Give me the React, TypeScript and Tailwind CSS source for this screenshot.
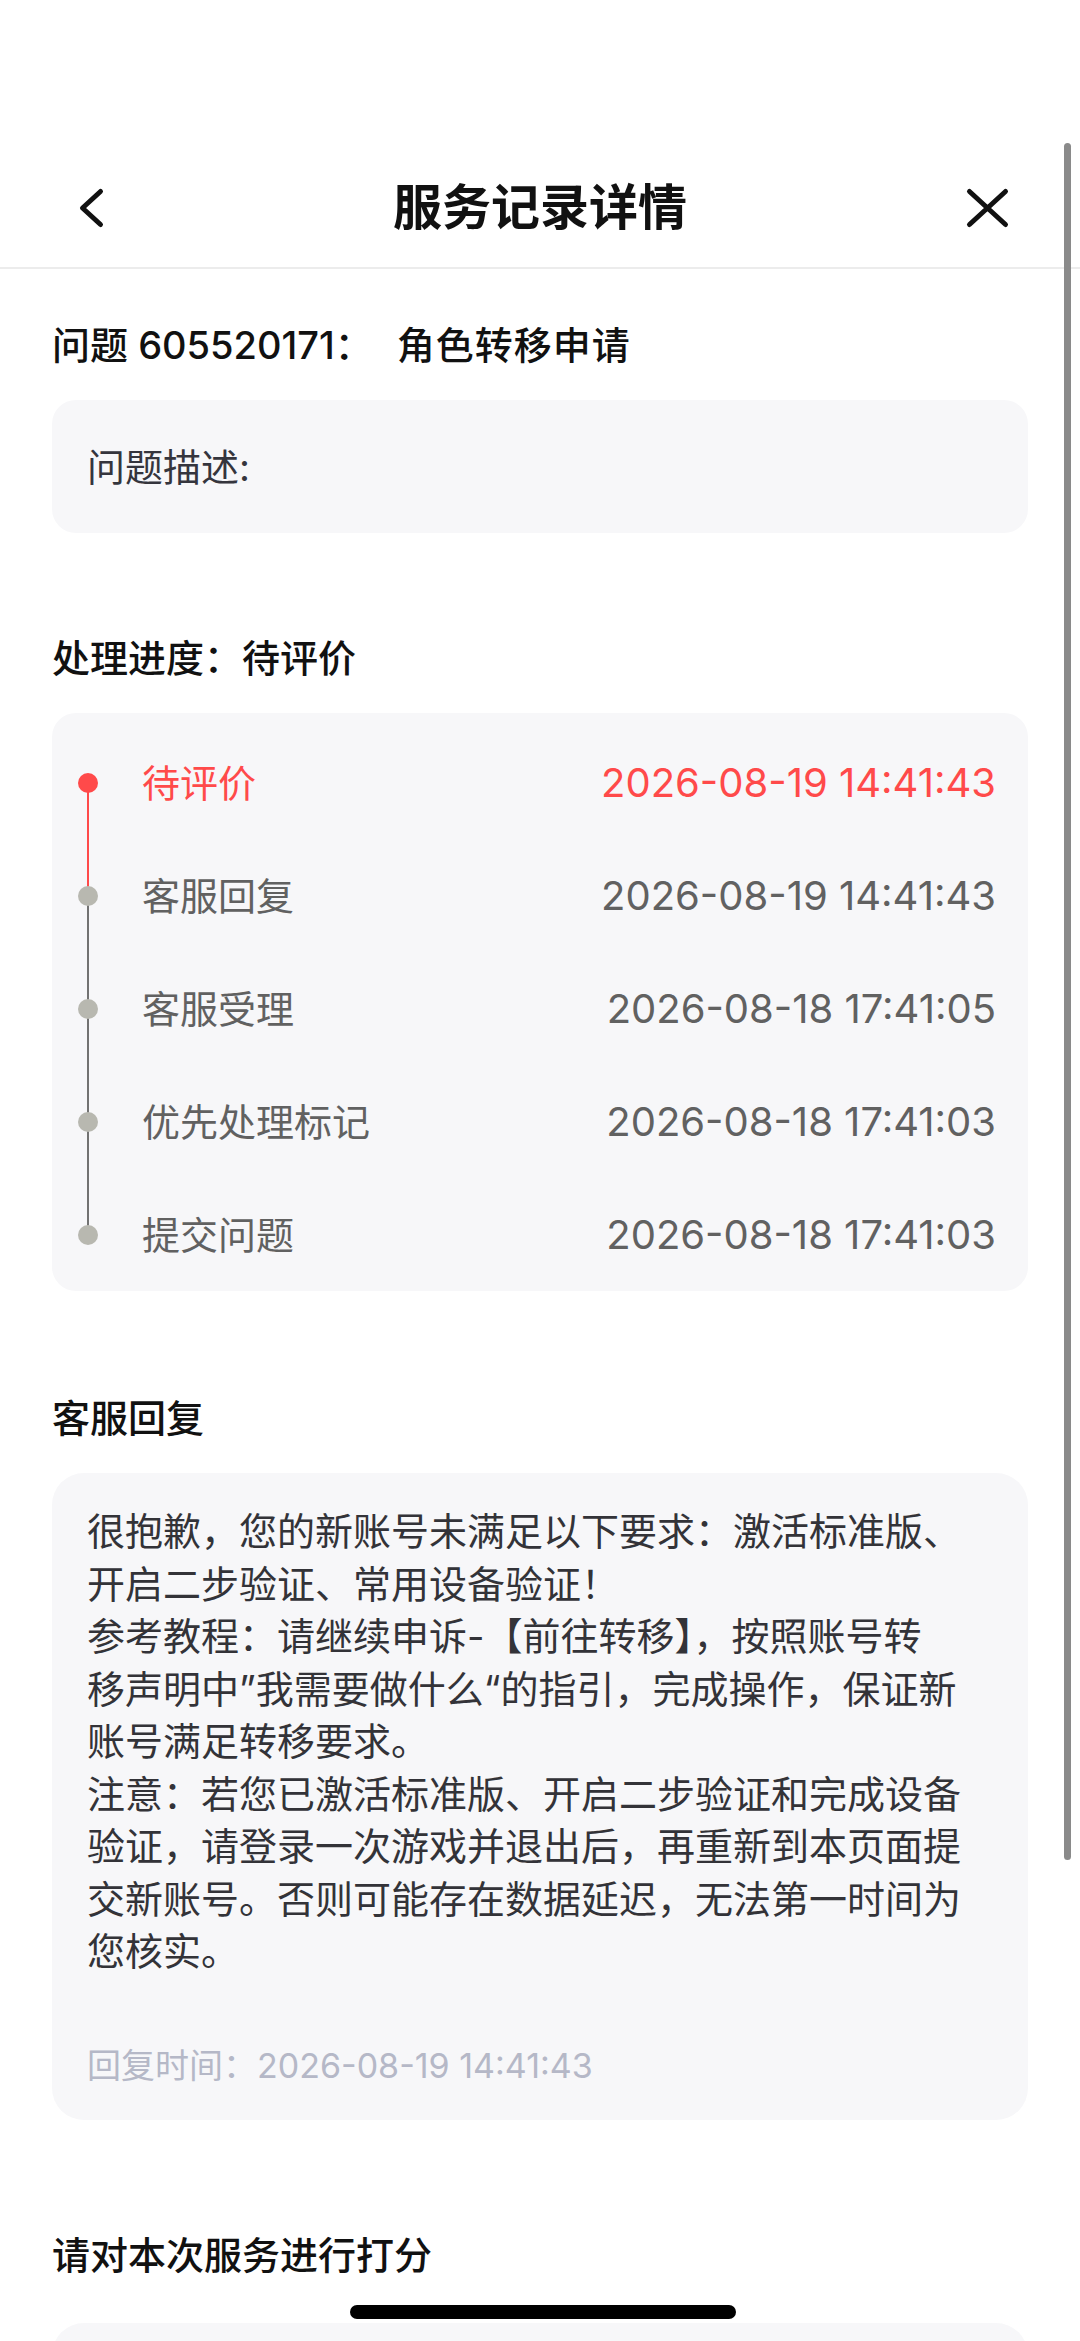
import React from 'react';

type Step = { label: string; time: string; active?: boolean };

const steps: Step[] = [
  { label: '待评价', time: '2026-08-19 14:41:43', active: true },
  { label: '客服回复', time: '2026-08-19 14:41:43' },
  { label: '客服受理', time: '2026-08-18 17:41:05' },
  { label: '优先处理标记', time: '2026-08-18 17:41:03' },
  { label: '提交问题', time: '2026-08-18 17:41:03' },
];

// visual lines of the reply, kept as in the app
const replyLines = [
  '很抱歉，您的新账号未满足以下要求：激活标准版、',
  '开启二步验证、常用设备验证！',
  '参考教程：请继续申诉-【前往转移】，按照账号转',
  '移声明中”我需要做什么“的指引，完成操作，保证新',
  '账号满足转移要求。',
  '注意：若您已激活标准版、开启二步验证和完成设备',
  '验证，请登录一次游戏并退出后，再重新到本页面提',
  '交新账号。否则可能存在数据延迟，无法第一时间为',
  '您核实。',
];

const font = 'font-["Inter","Noto_Sans_CJK_SC",sans-serif]';

const SectionTitle: React.FC<{ children: React.ReactNode; className?: string }> = ({ children, className }) => (
  <h2 className={`text-[38px] leading-[52px] font-medium text-[#111] ${className ?? ''}`}>{children}</h2>
);

const App: React.FC = () => {
  return (
    <div className={`relative h-[2341px] overflow-hidden bg-white ${font}`}>
      {/* Header */}
      <div className="pt-[148px]">
        <div className="grid h-[121px] grid-cols-[1fr_auto_1fr] items-center border-b-2 border-[#ececec]">
          <div className="flex pl-[76px]">
            <svg width="30" height="44" viewBox="0 0 30 44" fill="none">
              <path d="M24.5 5.5 L6.5 22 L24.5 38.5" stroke="#111" strokeWidth="5" strokeLinecap="round" strokeLinejoin="round" />
            </svg>
          </div>
          <h1 className="text-[49px] font-bold leading-[60px] text-[#111]">服务记录详情</h1>
          <div className="flex justify-end pr-[68px]">
            <svg width="50" height="44" viewBox="0 0 50 44" fill="none">
              <path d="M7.5 5.5 L43.5 38.5 M43.5 5.5 L7.5 38.5" stroke="#111" strokeWidth="5" strokeLinecap="round" />
            </svg>
          </div>
        </div>
      </div>

      <div className="px-[52px]">
        {/* Question */}
        <SectionTitle className="mt-[50px]">
          问题 605520171：<span className="ml-[24px] tracking-[1px]">角色转移申请</span>
        </SectionTitle>
        <div className="mt-[29px] flex h-[133px] items-center rounded-[24px] bg-[#f7f7f9] pl-[35px]">
          <span className="text-[38px] leading-[52px] text-[#35353d]">问题描述:</span>
        </div>

        {/* Progress */}
        <SectionTitle className="mt-[99px]">处理进度：待评价</SectionTitle>
        <div className="mt-[29px] rounded-[24px] bg-[#f7f7f9] pt-[13px] pl-[26px] pr-[32px]">
          {steps.map((s, i) => (
            <div key={s.label} className="relative flex h-[113px] items-center">
              {i < steps.length - 1 && (
                <div
                  className={`absolute top-1/2 left-[9px] h-[113px] w-[2px] ${
                    i === 0 ? 'bg-[#ff4a4a]' : 'bg-[#727272]'
                  }`}
                />
              )}
              <div
                className={`relative z-10 h-[20px] w-[20px] rounded-full ${
                  s.active ? 'bg-[#ff4a4a]' : 'bg-[#b8b8b0]'
                }`}
              />
              <span
                className={`ml-[44px] flex-1 text-[38px] leading-[52px] ${
                  s.active ? 'text-[#ff4a4a]' : 'text-[#616161]'
                }`}
              >
                {s.label}
              </span>
              <span className={`text-[40px] leading-[52px] ${s.active ? 'text-[#ff4a4a]' : 'text-[#616161]'}`}>
                {s.time}
              </span>
            </div>
          ))}
        </div>

        {/* Reply */}
        <SectionTitle className="mt-[101px]">客服回复</SectionTitle>
        <div className="mt-[29px] rounded-[32px] bg-[#f7f7f9] pt-[32px] pb-[31px] pl-[35px] pr-[30px]">
          <div className="text-[38px] leading-[52.5px] whitespace-nowrap text-[#333338]">
            {replyLines.map((l) => (
              <div key={l}>{l}</div>
            ))}
          </div>
          <div className="mt-[65px] text-[34px] leading-[46px] text-[#b5b8c7]">回复时间：2026-08-19 14:41:43</div>
        </div>

        {/* Rating */}
        <SectionTitle className="mt-[109px]">请对本次服务进行打分</SectionTitle>
        <div className="mt-[42px] h-[300px] rounded-[32px] bg-[#f7f7f9]" />
      </div>

      {/* scroll indicator */}
      <div className="absolute top-[143px] right-[9px] h-[1717px] w-[7px] rounded-full bg-[#8a8a8a]" />
      {/* home indicator */}
      <div className="absolute bottom-[22px] left-[350px] h-[14px] w-[386px] rounded-full bg-black" />
    </div>
  );
};

export default App;
